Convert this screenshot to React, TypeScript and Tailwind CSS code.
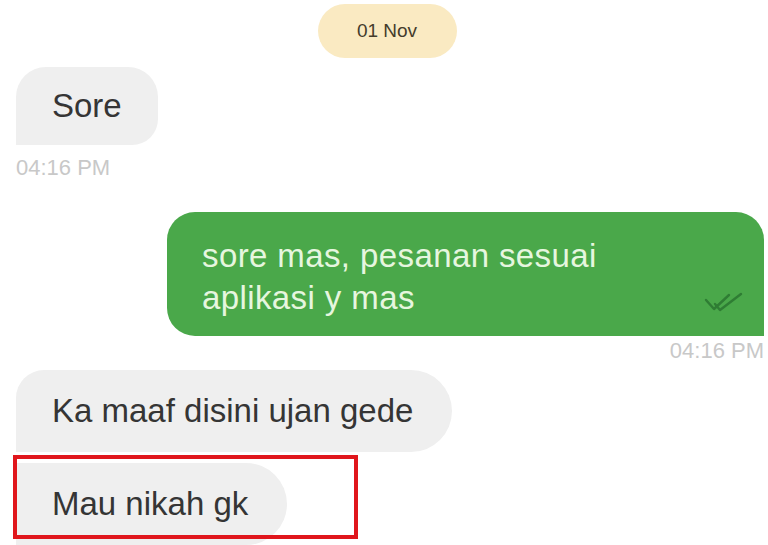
import React from "react";

function DoubleTick() {
  return (
    <svg
      width="42"
      height="24"
      viewBox="0 0 42 24"
      fill="none"
      stroke="#2f7d34"
      strokeWidth={2.4}
      strokeLinecap="round"
      strokeLinejoin="round"
    >
      <path d="M2 9 L10 18 L25 4" />
      <path d="M11 13 L16 19 L37 3" />
    </svg>
  );
}

function Time({ right }: { right?: boolean }) {
  return (
    <div
      className={`text-[22px] leading-[24px] text-[#c8c8c8] ${right ? "text-right" : ""}`}
    >
      04:16 PM
    </div>
  );
}

export default function App() {
  return (
    <div
      className="relative h-[545px] w-[768px] overflow-hidden bg-white pl-[16px] pr-[4px]"
      style={{ fontFamily: '"Liberation Sans", Arial, sans-serif' }}
    >
      <div className="flex justify-center pt-[4px]">
        <div className="ml-[-6px] flex h-[54px] w-[139px] items-center justify-center rounded-full bg-[#faeac2] text-[19px] text-[#443c2c]">
          01 Nov
        </div>
      </div>

      <div className="mt-[9px] flex h-[78px] w-[142px] items-center rounded-t-[30px] rounded-br-[26px] bg-[#efefef] pl-[36px] text-[33px] text-[#353535]">
        Sore
      </div>
      <div className="mt-[11px]">
        <Time />
      </div>

      <div className="relative mt-[32px] ml-[151px] h-[124px] rounded-l-[28px] rounded-tr-[28px] bg-[#4aa84a] pl-[35px] pt-[23px] text-[33px] leading-[42px] tracking-[0.012em] text-[#e6f6df]">
        sore mas, pesanan sesuai
        <br />
        aplikasi y mas
        <div className="absolute right-[18px] bottom-[21px]">
          <DoubleTick />
        </div>
      </div>
      <div className="mt-[3px]">
        <Time right />
      </div>

      <div className="mt-[7px] flex h-[82px] w-[436px] items-center rounded-tl-[28px] rounded-r-[41px] bg-[#efefef] pl-[36px] text-[33px] text-[#353535]">
        Ka maaf disini ujan gede
      </div>
      <div className="mt-[11px] flex h-[82px] w-[271px] items-center rounded-r-[41px] bg-[#efefef] pl-[36px] text-[33px] text-[#353535]">
        Mau nikah gk
      </div>

      <div className="absolute left-[13px] top-[455px] h-[84px] w-[345px] border-[4px] border-[#e0161c]" />
    </div>
  );
}
